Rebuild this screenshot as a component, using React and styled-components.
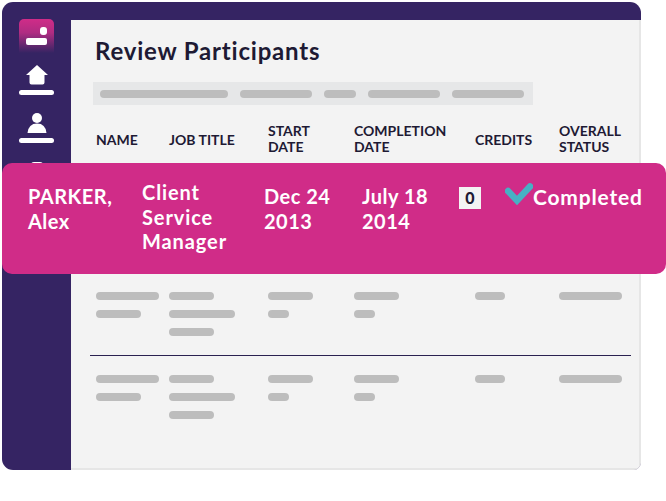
import React from "react";
import styled, { createGlobalStyle } from "styled-components";

const columns = "73px 99px 86px 121px 84px 1fr";
const filterWidths = [128, 72, 32, 72, 72];
const headers = [
  { label: "NAME", single: true },
  { label: "JOB TITLE", single: true },
  { label: "START DATE" },
  { label: "COMPLETION DATE" },
  { label: "CREDITS", single: true },
  { label: "OVERALL STATUS" },
];
const skeletonCols = [
  [63, 45],
  [45, 66, 45],
  [45, 21],
  [45, 21],
  [30],
  [63],
];

const App = () => {
  return (
    <Page>
      <GlobalStyle />
      <Frame>
        <Sidebar>
          <LogoTile>
            <LogoDot />
            <LogoBar />
          </LogoTile>
          <NavItem>
            <svg width="22" height="20" viewBox="0 0 22 20">
              <path d="M11 0 L22 10 H18.5 V17.5 Q18.5 19.5 16.5 19.5 H5.5 Q3.5 19.5 3.5 17.5 V10 H0 Z" fill="#fff" />
            </svg>
            <NavLine />
          </NavItem>
          <NavItem>
            <svg width="22" height="20" viewBox="0 0 22 20">
              <circle cx="11" cy="5" r="5" fill="#fff" />
              <path d="M1.5 20 Q2.5 10.5 11 10.5 Q19.5 10.5 20.5 20 Z" fill="#fff" />
            </svg>
            <NavLine />
          </NavItem>
          <NavItem>
            <svg width="22" height="20" viewBox="0 0 22 20">
              <rect x="5" y="1" width="12" height="19" rx="3" fill="#fff" />
            </svg>
            <NavLine />
          </NavItem>
        </Sidebar>
        <Main>
          <Title>Review Participants</Title>
          <FilterBar>
            {filterWidths.map((w, i) => (
              <Pill key={i} $w={w} />
            ))}
          </FilterBar>
          <HeaderRow>
            {headers.map((h) => (
              <HeaderCell key={h.label} $single={h.single}>
                {h.label}
              </HeaderCell>
            ))}
          </HeaderRow>
          {[0, 1, 2].map((r) => (
            <SkeletonRow key={r}>
              {skeletonCols.map((bars, c) => (
                <SkeletonCell key={c}>
                  {bars.map((w, i) => (
                    <Pill key={i} $w={w} />
                  ))}
                </SkeletonCell>
              ))}
            </SkeletonRow>
          ))}
        </Main>
      </Frame>
      <Banner>
        <BannerCell $low>PARKER, Alex</BannerCell>
        <BannerCell $wide>Client Service Manager</BannerCell>
        <BannerCell $low>Dec 24 2013</BannerCell>
        <BannerCell $low>July 18 2014</BannerCell>
        <CreditCell>
          <CreditBadge>0</CreditBadge>
        </CreditCell>
        <StatusCell>
          <svg width="28" height="22" viewBox="0 0 28 22">
            <path d="M3 8 L12 17.5 L25 3.5" fill="none" stroke="#47b0c4" strokeWidth="6.5" strokeLinecap="round" strokeLinejoin="miter" />
          </svg>
          <StatusText>Completed</StatusText>
        </StatusCell>
      </Banner>
    </Page>
  );
};

export default App;

const GlobalStyle = createGlobalStyle`
  html, body {
    margin: 0;
    background: #fff;
  }
  body {
    font-family: "Lato", "Open Sans", sans-serif;
  }
`;

const Page = styled.div`
  position: relative;
  width: 666px;
  height: 501px;
  padding: 2px;
  box-sizing: border-box;
  overflow: hidden;
`;

const Frame = styled.div`
  display: flex;
  width: 639px;
  height: 468px;
  background: #352463;
  border-radius: 11px 11px 8px 11px;
  overflow: hidden;
`;

const Sidebar = styled.div`
  flex: 0 0 69px;
  box-sizing: border-box;
  padding-top: 17px;
  display: flex;
  flex-direction: column;
  align-items: center;
  overflow: hidden;
`;

const LogoTile = styled.div`
  position: relative;
  flex: none;
  width: 35px;
  height: 34px;
  margin-bottom: 12px;
  border-radius: 5px 5px 0 0;
  background: linear-gradient(180deg, #d02c88 0%, #b02c82 40%, #352463 100%);
`;

const LogoDot = styled.div`
  position: absolute;
  left: 21px;
  top: 8px;
  width: 7px;
  height: 8px;
  border-radius: 3px;
  background: #fff;
`;

const LogoBar = styled.div`
  position: absolute;
  left: 7px;
  top: 19px;
  width: 21px;
  height: 7px;
  border-radius: 2px;
  background: #fff;
`;

const NavItem = styled.div`
  flex: none;
  display: flex;
  flex-direction: column;
  align-items: center;
  height: 48px;
  svg {
    display: block;
  }
`;

const NavLine = styled.div`
  width: 35px;
  height: 5px;
  margin-top: 5px;
  border-radius: 3px;
  background: #fff;
`;

const Main = styled.div`
  flex: 1;
  margin-top: 18px;
  box-sizing: border-box;
  padding: 16px 8px 0 19px;
  background: #f3f3f3;
  border-right: 2px solid #e6e6e6;
  border-bottom: 2px solid #e6e6e6;
`;

const Title = styled.h1`
  margin: 0 0 16px 5px;
  font-size: 24px;
  line-height: 30px;
  letter-spacing: 0.8px;
  font-weight: 700;
  color: #1e1a34;
`;

const FilterBar = styled.div`
  display: flex;
  align-items: center;
  gap: 12px;
  width: 440px;
  height: 23px;
  margin-left: 3px;
  padding-left: 7px;
  box-sizing: border-box;
  background: #e6e7e8;
`;

const Pill = styled.div`
  width: ${(props) => props.$w}px;
  height: 8px;
  border-radius: 4px;
  background: #bdbdbd;
`;

const HeaderRow = styled.div`
  display: grid;
  grid-template-columns: ${columns};
  align-items: center;
  height: 33px;
  margin: 17px 0 35px;
  padding-left: 6px;
`;

const HeaderCell = styled.div`
  padding-right: 10px;
  padding-top: ${(props) => (props.$single ? "2px" : "0")};
  font-size: 14px;
  line-height: 16px;
  font-weight: 700;
  color: #1e1a34;
`;

const SkeletonRow = styled.div`
  display: grid;
  grid-template-columns: ${columns};
  height: 63px;
  padding: 19px 0 0 6px;
  border-bottom: 1px solid #2a2150;
  &:last-child {
    border-bottom: none;
  }
`;

const SkeletonCell = styled.div`
  display: flex;
  flex-direction: column;
  gap: 10px;
`;

const Banner = styled.div`
  position: absolute;
  left: 2px;
  top: 163px;
  width: 664px;
  height: 111px;
  box-sizing: border-box;
  padding: 17px 0 0 26px;
  display: grid;
  grid-template-columns: 114px 122px 98px 97px 46px 1fr;
  align-items: start;
  background: #d02c88;
  border-radius: 10px;
  color: #fff;
  font-size: 20px;
  line-height: 24.5px;
  font-weight: 700;
  letter-spacing: 0.5px;
`;

const BannerCell = styled.div`
  margin-top: ${(props) => (props.$low ? "4px" : "0")};
  padding-right: 12px;
  letter-spacing: ${(props) => (props.$wide ? "0.9px" : "0.5px")};
`;

const CreditCell = styled.div`
  padding-top: 7px;
`;

const CreditBadge = styled.div`
  width: 22px;
  height: 22px;
  background: #f3f3f3;
  color: #1e1a34;
  font-size: 16px;
  font-weight: 900;
  line-height: 22px;
  letter-spacing: 0;
  text-align: center;
`;

const StatusCell = styled.div`
  display: flex;
  align-items: flex-start;
  margin-top: 3px;
  svg {
    flex: none;
  }
`;

const StatusText = styled.span`
  font-size: 21px;
  line-height: 28px;
  letter-spacing: 0.8px;
`;
